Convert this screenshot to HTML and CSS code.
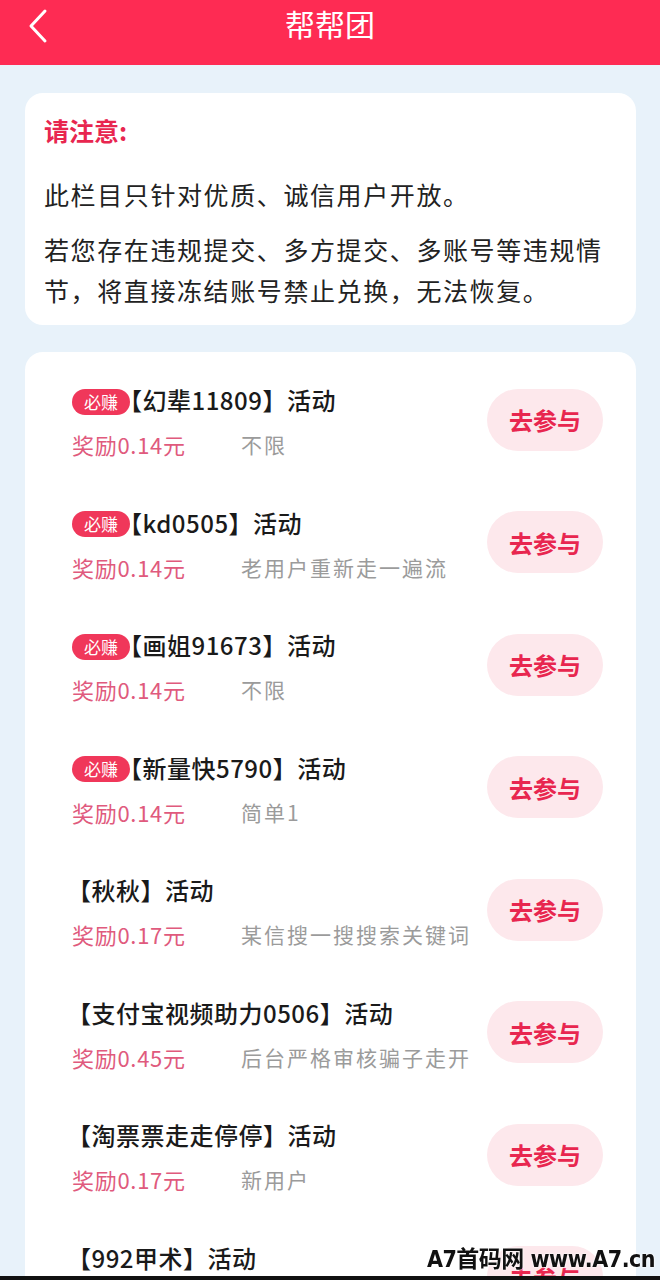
FILE: index.html
```html
<!DOCTYPE html>
<html lang="zh-CN">
<head>
    <meta charset="UTF-8">
    <meta name="viewport" content="width=device-width, initial-scale=1.0">
    <title>帮帮团</title>
    <link rel="stylesheet" href="styles.css">
</head>
<body>

<div class="header">
    <a class="back" href="#">
        <svg width="22" height="36" viewBox="0 0 22 36"><path d="M18 3 L4 18 L18 33" fill="none" stroke="#fff" stroke-width="3" stroke-linecap="round" stroke-linejoin="round"/></svg>
    </a>
    <h1>帮帮团</h1>
</div>

<div class="page">
    <!-- notice -->
    <div class="card notice">
        <h3>请注意:</h3>
        <p>此栏目只针对优质、诚信用户开放。</p>
        <p class="last">若您存在违规提交、多方提交、多账号等违规情节，将直接冻结账号禁止兑换，无法恢复。</p>
    </div>

    <!-- task list -->
    <div class="card task-list">
        <div class="task">
            <div class="task-info">
                <div class="task-title"><span class="badge">必赚</span><span class="name">【幻辈11809】活动</span></div>
                <div class="task-meta"><span class="reward">奖励0.14元</span><span class="desc">不限</span></div>
            </div>
            <button class="join">去参与</button>
        </div>
        <div class="task">
            <div class="task-info">
                <div class="task-title"><span class="badge">必赚</span><span class="name">【kd0505】活动</span></div>
                <div class="task-meta"><span class="reward">奖励0.14元</span><span class="desc">老用户重新走一遍流</span></div>
            </div>
            <button class="join">去参与</button>
        </div>
        <div class="task">
            <div class="task-info">
                <div class="task-title"><span class="badge">必赚</span><span class="name">【画姐91673】活动</span></div>
                <div class="task-meta"><span class="reward">奖励0.14元</span><span class="desc">不限</span></div>
            </div>
            <button class="join">去参与</button>
        </div>
        <div class="task">
            <div class="task-info">
                <div class="task-title"><span class="badge">必赚</span><span class="name">【新量快5790】活动</span></div>
                <div class="task-meta"><span class="reward">奖励0.14元</span><span class="desc">简单1</span></div>
            </div>
            <button class="join">去参与</button>
        </div>
        <div class="task">
            <div class="task-info">
                <div class="task-title"><span class="name">【秋秋】活动</span></div>
                <div class="task-meta"><span class="reward">奖励0.17元</span><span class="desc">某信搜一搜搜索关键词</span></div>
            </div>
            <button class="join">去参与</button>
        </div>
        <div class="task">
            <div class="task-info">
                <div class="task-title"><span class="name">【支付宝视频助力0506】活动</span></div>
                <div class="task-meta"><span class="reward">奖励0.45元</span><span class="desc">后台严格审核骗子走开</span></div>
            </div>
            <button class="join">去参与</button>
        </div>
        <div class="task">
            <div class="task-info">
                <div class="task-title"><span class="name">【淘票票走走停停】活动</span></div>
                <div class="task-meta"><span class="reward">奖励0.17元</span><span class="desc">新用户</span></div>
            </div>
            <button class="join">去参与</button>
        </div>
        <div class="task">
            <div class="task-info">
                <div class="task-title"><span class="name">【992甲术】活动</span></div>
                <div class="task-meta"><span class="reward">奖励0.17元</span><span class="desc">新用户</span></div>
            </div>
            <button class="join">去参与</button>
        </div>
    </div>
</div>

<div class="watermark">A7首码网 www.A7.cn</div>
<div class="bottom-bar"></div>

</body>
</html>
```

FILE: styles.css
```css
body {
    margin: 0;
    background-color: #e8f2fa;
    font-family: "Noto Sans CJK SC", "Noto Sans", sans-serif;
    color: #1f1f1f;
}
.header {
    height: 65px;
    background-color: #fe2b53;
    display: flex;
    align-items: center;
    justify-content: center;
    position: relative;
}
.header h1 {
    margin: 0;
    color: #fff;
    font-size: 30px;
    font-weight: normal;
    line-height: 1;
    margin-top: -20px;
}
.back {
    position: absolute;
    left: 27px;
    top: 8px;
    display: flex;
}
.page {
    padding: 28px 24px 0 25px;
}
.card {
    background-color: #fff;
    border-radius: 18px;
}
.notice {
    padding: 19px 19px 14px 19px;
    margin-bottom: 27px;
}
.notice h3 {
    margin: 0 0 26px;
    color: #e8264f;
    font-size: 25px;
    line-height: 36px;
    font-weight: bold;
}
.notice p {
    margin: 0 0 14px;
    font-size: 25px;
    line-height: 41px;
    letter-spacing: 1.6px;
    color: #222;
}
.notice p.last {
    margin-bottom: 0;
}
.task-list {
    padding: 8px 33px 40px 47px;
}
.task {
    display: flex;
    align-items: center;
    justify-content: space-between;
    padding: 23px 0 22.5px;
}
.task-title {
    display: flex;
    align-items: center;
    font-size: 24px;
    line-height: 34px;
    font-weight: 500;
    letter-spacing: 0.5px;
    color: #1a1a1a;
}
.task-title .name {
    margin-left: -5px;
}
.task-title .badge + .name {
    margin-left: -12px;
}
.badge {
    display: inline-block;
    width: 58px;
    height: 26px;
    line-height: 26px;
    border-radius: 13px;
    background-color: #f0375a;
    color: #fff;
    font-size: 17px;
    font-weight: normal;
    letter-spacing: 0;
    text-align: center;
    margin-top: 3px;
    position: relative;
    z-index: 1;
}
.task-meta {
    display: flex;
    margin-top: 11px;
    line-height: 32px;
}
.reward {
    width: 169px;
    font-size: 22px;
    letter-spacing: 0.7px;
    color: #e05a7d;
}
.desc {
    font-size: 21px;
    color: #9b9b9b;
    letter-spacing: 2px;
}
.join {
    width: 116px;
    height: 62px;
    border: none;
    border-radius: 31px;
    background-color: #fde8ec;
    color: #e8264f;
    font-family: inherit;
    font-size: 24px;
    font-weight: bold;
    cursor: pointer;
    margin-top: -4px;
}
.watermark {
    position: fixed;
    right: 5px;
    bottom: 4px;
    font-family: "DejaVu Sans Condensed", "DejaVu Sans", "Noto Sans CJK SC", sans-serif;
    font-size: 23px;
    font-weight: bold;
    letter-spacing: -0.5px;
    color: #111;
    line-height: 34px;
    text-shadow: 0 0 2px #fff, 0 0 2px #fff;
}
.bottom-bar {
    position: fixed;
    left: 0;
    right: 0;
    bottom: 0;
    height: 4px;
    background-color: #111;
}
```
